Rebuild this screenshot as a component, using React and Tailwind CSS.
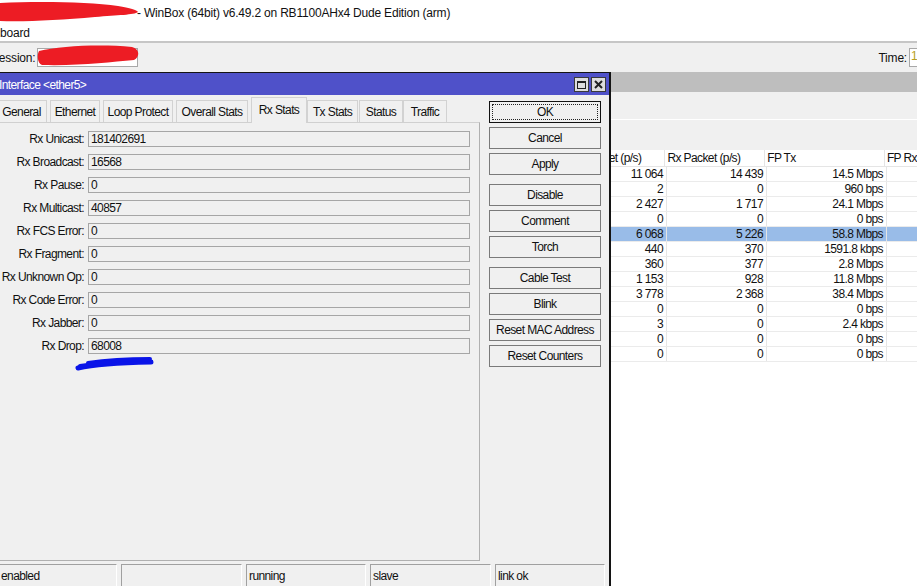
import React from 'react';

const fields = [
  ['Rx Unicast:', '181402691'],
  ['Rx Broadcast:', '16568'],
  ['Rx Pause:', '0'],
  ['Rx Multicast:', '40857'],
  ['Rx FCS Error:', '0'],
  ['Rx Fragment:', '0'],
  ['Rx Unknown Op:', '0'],
  ['Rx Code Error:', '0'],
  ['Rx Jabber:', '0'],
  ['Rx Drop:', '68008'],
];

const tabs = [
  { name: 'General', cls: 'w-[51px] ml-0' },
  { name: 'Ethernet', cls: 'w-[50px] ml-[3px]' },
  { name: 'Loop Protect', cls: 'w-[70px] ml-[3px]' },
  { name: 'Overall Stats', cls: 'w-[72px] ml-[3px]' },
  { name: 'Rx Stats', cls: 'w-[56px] ml-[3px]', active: true },
  { name: 'Tx Stats', cls: 'w-[51px] ml-0' },
  { name: 'Status', cls: 'w-[44px] ml-px' },
  { name: 'Traffic', cls: 'w-[44px] ml-0' },
];

const buttonGroups = [
  ['OK', 'Cancel', 'Apply'],
  ['Disable', 'Comment', 'Torch'],
  ['Cable Test', 'Blink', 'Reset MAC Address', 'Reset Counters'],
];

const rows = [
  ['11 064', '14 439', '14.5 Mbps'],
  ['2', '0', '960 bps'],
  ['2 427', '1 717', '24.1 Mbps'],
  ['0', '0', '0 bps'],
  ['6 068', '5 226', '58.8 Mbps', true],
  ['440', '370', '1591.8 kbps'],
  ['360', '377', '2.8 Mbps'],
  ['1 153', '928', '11.8 Mbps'],
  ['3 778', '2 368', '38.4 Mbps'],
  ['0', '0', '0 bps'],
  ['3', '0', '2.4 kbps'],
  ['0', '0', '0 bps'],
  ['0', '0', '0 bps'],
];

const status = [
  { text: 'enabled', cls: 'w-[121px] pl-[4px]' },
  { text: '', cls: 'w-[121px] pl-[2px]' },
  { text: 'running', cls: 'w-[120px] pl-[2px]' },
  { text: 'slave', cls: 'w-[121px] pl-[2px]' },
  { text: 'link ok', cls: 'w-[110px] pl-[2px]' },
];

function WinButton({ label }) {
  const isOk = label === 'OK';
  return (
    <div
      className={`relative w-[112px] h-[22px] flex items-center justify-center bg-[#f0f0f0] border ${
        isOk ? 'border-[#111]' : 'border-[#7a7a7a]'
      }`}
    >
      {isOk && <div className="absolute inset-[2px] border border-dotted border-[#222]" />}
      {label}
    </div>
  );
}

const Dialog = () => (
  <div className="absolute left-[-6px] top-[72px] w-[617px] h-[520px] bg-[#f0f0f0] border-t border-r-2 border-[#141414] tracking-[-0.6px]">
    {/* title bar */}
    <div className="h-[22px] bg-[#4f51c9] flex items-center pl-[5px] pr-[3px] pt-px text-white">
      <span className="flex-1">Interface &lt;ether5&gt;</span>
      <div className="flex gap-[2px]">
        <div className="w-[15px] h-[15px] bg-[#dedede] border border-[#3a3a3a] flex items-center justify-center">
          <div className="w-[9px] h-[8px] border border-t-2 border-[#222]" />
        </div>
        <div className="w-[15px] h-[15px] bg-[#dedede] border border-[#3a3a3a] flex items-center justify-center">
          <svg width="9" height="9" viewBox="0 0 9 9">
            <path d="M1 1 L8 8 M8 1 L1 8" stroke="#222" strokeWidth="2" />
          </svg>
        </div>
      </div>
    </div>

    <div className="flex pt-[2px]">
      <div className="w-[486px]">
        {/* tabs */}
        <div className="h-[25px] flex items-end pl-[2px]">
          {tabs.map((t) => (
            <div
              key={t.name}
              className={`${t.cls} flex justify-center border border-b-0 border-[#d2d2d2] bg-[#f0f0f0] ${
                t.active ? 'h-[26px] -mb-px items-start pt-[5px] relative z-10' : 'h-[22px] items-center'
              }`}
            >
              {t.name}
            </div>
          ))}
        </div>
        {/* panel */}
        <div className="h-[439px] border border-l-0 border-t-[#d0d0d0] border-r-[#b0b0b0] border-b-[#b0b0b0] pt-[8px] flex flex-col gap-[7px]">
          {fields.map(([label, value]) => (
            <div key={label} className="flex items-center h-[16px]">
              <div className="w-[90px] text-right">{label}</div>
              <div className="ml-[4px] w-[382px] h-[16px] border border-[#a6a6a6] bg-[#f0f0f0] pl-[2px] flex items-center">
                {value}
              </div>
            </div>
          ))}
        </div>
      </div>

      {/* buttons */}
      <div className="ml-[9px] pt-[4px] flex flex-col gap-[9px]">
        {buttonGroups.map((g, i) => (
          <div key={i} className="flex flex-col gap-[4px]">
            {g.map((b) => (
              <WinButton key={b} label={b} />
            ))}
          </div>
        ))}
      </div>
    </div>

    {/* status bar */}
    <div className="mt-[3px] flex gap-[4px] pl-[2px]">
      {status.map((s, i) => (
        <div
          key={i}
          className={`${s.cls} h-[22px] flex items-center border-t border-l border-[#a0a0a0] border-r border-r-white`}
        >
          {s.text}
        </div>
      ))}
    </div>
  </div>
);

export default function App() {
  return (
    <div className="relative w-[917px] h-[586px] overflow-hidden bg-white font-['Liberation_Sans',Arial,sans-serif] text-[12px] leading-[14px] text-[#111]">
      <div className="flex flex-col">
        <div className="h-[25px] flex items-center pl-[137px] tracking-[-0.2px]">
          - WinBox (64bit) v6.49.2 on RB1100AHx4 Dude Edition (arm)
        </div>
        <div className="h-[16px] flex items-center tracking-[-0.2px]">board</div>
        <div className="h-[2px] bg-[#c6c6c6]" />
        <div className="h-[29px] bg-[#f0f0f0] flex items-center tracking-[-0.2px]">
          <span className="ml-[-9px]">Session:</span>
          <div className="ml-[2px] w-[101px] h-[19px] bg-white border border-[#a8a8a8]" />
          <div className="flex-1" />
          <span className="mr-[2px]">Time:</span>
          <div className="w-[8px] h-[19px] bg-white border border-r-0 border-[#a8a8a8] pl-[1px] text-[#b8a020] overflow-hidden">1</div>
        </div>
        <div className="h-[20px] bg-[#bebebe]" />
        <div className="h-[27px] bg-[#f0f0f0]" />
        <div className="h-px bg-white" />
        <div className="h-[30px] bg-[#f0f0f0]" />

        {/* table */}
        <div className="bg-white tracking-[-0.6px]">
          <div className="flex h-[17px] border-b border-[#e5e5e5]">
            <div className="w-[563px]" />
            <div className="w-[104px] pl-[8px] flex items-center border-r border-[#e5e5e5] whitespace-nowrap">Tx Packet (p/s)</div>
            <div className="w-[100px] pl-[2px] flex items-center border-r border-[#e5e5e5]">Rx Packet (p/s)</div>
            <div className="w-[120px] pl-[2px] flex items-center border-r border-[#e5e5e5]">FP Tx</div>
            <div className="flex-1 pl-[2px] flex items-center whitespace-nowrap">FP Rx</div>
          </div>
          {rows.map((r, i) => (
            <div key={i} className={`flex h-[15px] border-b border-[#ebebeb] ${r[3] ? 'bg-[#99bce8]' : ''}`}>
              <div className="w-[563px]" />
              <div className="w-[104px] pr-[3px] flex items-center justify-end border-r border-[#e5e5e5]">{r[0]}</div>
              <div className="w-[100px] pr-[3px] flex items-center justify-end border-r border-[#e5e5e5]">{r[1]}</div>
              <div className="w-[120px] pr-[3px] flex items-center justify-end border-r border-[#e5e5e5]">{r[2]}</div>
              <div className="flex-1" />
            </div>
          ))}
        </div>
      </div>

      <Dialog />

      {/* redaction scribbles */}
      <svg className="absolute left-0 top-0" width="145" height="70" viewBox="0 0 145 70">
        <path
          d="M0 3 C 40 1, 90 2, 118 6 C 130 8, 137 10, 138 12 C 134 15, 118 15, 95 17 C 60 20, 25 22, 0 21 Z"
          fill="#ed1c24"
        />
        <path
          d="M39 51 C 60 46, 100 44, 132 47 C 140 49, 140 57, 134 60 C 110 62, 80 66, 42 65 C 37 63, 37 54, 39 51 Z"
          fill="#ed1c24"
        />
      </svg>
      <svg className="absolute left-0 top-[350px]" width="170" height="30" viewBox="0 350 170 30">
        <path d="M78 368 Q 100 363 151 362" stroke="#0a14e8" strokeWidth="5" fill="none" strokeLinecap="round" />
        <path d="M88 363 Q 115 359 150 359" stroke="#0a14e8" strokeWidth="4" fill="none" strokeLinecap="round" />
        <path d="M80 366 L 110 362" stroke="#0a14e8" strokeWidth="4" fill="none" strokeLinecap="round" />
      </svg>
    </div>
  );
}
